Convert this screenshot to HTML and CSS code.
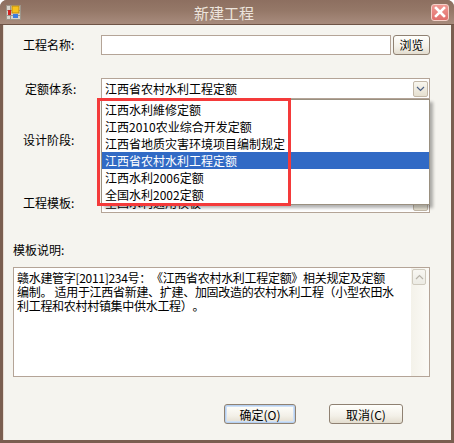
FILE: index.html
```html
<!DOCTYPE html>
<html lang="zh-CN">
<head>
    <meta charset="UTF-8">
    <meta name="viewport" content="width=device-width, initial-scale=1.0">
    <title>新建工程</title>
    <link rel="stylesheet" href="styles.css">
</head>
<body>
    <div class="window">
        <div class="titlebar">
            <svg class="app-icon" width="15" height="15" viewBox="0 0 15 15">
                <rect x="0.5" y="0.5" width="14" height="14" fill="#d8d4cc" stroke="#9c958a"/>
                <line x1="0.5" y1="5.5" x2="14.5" y2="5.5" stroke="#9c958a"/>
                <line x1="0.5" y1="10.5" x2="14.5" y2="10.5" stroke="#9c958a"/>
                <line x1="4.5" y1="0.5" x2="4.5" y2="14.5" stroke="#9c958a"/>
                <rect x="6" y="1" width="7" height="7" fill="#f7c21c" stroke="#c08a10"/>
                <rect x="2" y="5" width="3" height="5" fill="#d42020"/>
                <rect x="7" y="9" width="5" height="4" fill="#3c7ce0"/>
            </svg>
            <div class="title">新建工程</div>
            <div class="close-btn">
                <svg width="12" height="12" viewBox="0 0 12 12">
                    <path d="M2 2 L10 10 M10 2 L2 10" stroke="#fff" stroke-width="2.6" stroke-linecap="square"/>
                </svg>
            </div>
        </div>

        <div class="client">
            <div class="row row-name">
                <div class="label">工程名称:</div>
                <div class="textbox"></div>
                <div class="btn btn-browse">浏览</div>
            </div>

            <div class="row row-quota">
                <div class="label label-quota">定额体系:</div>
                <div class="combo">
                    <span class="combo-text">江西省农村水利工程定额</span>
                    <span class="drop-btn"><svg width="9" height="6" viewBox="0 0 9 6"><path d="M1 1 L4.5 4.5 L8 1" fill="none" stroke="#4d6185" stroke-width="1.2"/></svg></span>
                </div>
            </div>

            <div class="row row-stage">
                <div class="label">设计阶段:</div>
                <div class="combo">
                    <span class="combo-text"></span>
                    <span class="drop-btn"></span>
                </div>
            </div>

            <div class="row row-template">
                <div class="label">工程模板:</div>
                <div class="combo">
                    <span class="combo-text">全国水利通用模板</span>
                    <span class="drop-btn"></span>
                </div>
            </div>

            <div class="caption">模板说明:</div>

            <div class="memo">
                <div class="memo-text">
                    <div>赣水建管字[2011]234号：《江西省农村水利工程定额》相关规定及定额</div>
                    <div>编制。 适用于江西省新建、扩建、加固改造的农村水利工程（小型农田水</div>
                    <div>利工程和农村村镇集中供水工程）。</div>
                </div>
                <div class="scrollbar">
                    <div class="scroll-up"><svg width="9" height="6" viewBox="0 0 9 6"><path d="M1 5 L4.5 1.5 L8 5" fill="none" stroke="#b8b4aa" stroke-width="1.2"/></svg></div>
                </div>
            </div>

            <div class="buttons">
                <div class="btn btn-ok">确定(O)</div>
                <div class="btn btn-cancel">取消(C)</div>
            </div>

            <!-- 展开的下拉列表 -->
            <ul class="droplist">
                <li>江西水利維修定额</li>
                <li>江西2010农业综合开发定额</li>
                <li>江西省地质灾害环境项目编制规定</li>
                <li class="selected">江西省农村水利工程定额</li>
                <li>江西水利2006定额</li>
                <li>全国水利2002定额</li>
            </ul>
            <div class="mark"></div>
        </div>
    </div>
</body>
</html>
```

FILE: styles.css
```css
body {
    margin: 0;
    width: 454px;
    height: 443px;
    overflow: hidden;
    background: #ffffff;
    font-family: "Noto Sans CJK SC", "Liberation Sans", sans-serif;
    font-size: 12px;
    color: #000;
}
.window {
    width: 454px;
    height: 443px;
    box-sizing: border-box;
    display: flex;
    flex-direction: column;
    background: #7a5e50;
    border-radius: 7px 7px 0 0;
    overflow: hidden;
}
.titlebar {
    height: 25px;
    flex: none;
    display: flex;
    align-items: center;
    position: relative;
    background: linear-gradient(#8d6f60 0%, #957868 45%, #a88c7d 100%);
    border-bottom: 1px solid #6f5446;
    box-sizing: border-box;
}
.app-icon {
    margin-left: 6px;
}
.title {
    flex: 1;
    text-align: center;
    color: #ece4dc;
    font-size: 15px;
    margin-right: 4px;
}
.close-btn {
    width: 18px;
    height: 17px;
    margin-right: 5px;
    box-sizing: border-box;
    border: 1px solid #f4d0c8;
    border-radius: 3px;
    background: linear-gradient(#f09a94, #e06e6a);
    display: flex;
    align-items: center;
    justify-content: center;
}
.client {
    flex: 1;
    position: relative;
    margin: 0 3px 3px 3px;
    background: #f5f4ef;
    border-left: 1px solid #e8dcd2;
    padding-left: 9px;
    padding-top: 9px;
    display: flex;
    flex-direction: column;
}
.row {
    display: flex;
    align-items: center;
    height: 21px;
}
.row-quota { margin-top: 23px; }
.row-stage { margin-top: 30px; }
.row-template { margin-top: 42px; }
.label {
    width: 88px;
    padding-left: 10px;
    box-sizing: border-box;
}
.label-quota {
    padding-left: 12px;
}
.textbox {
    width: 290px;
    height: 20px;
    box-sizing: border-box;
    border: 1px solid #b4a497;
    background: #fff;
}
.btn {
    box-sizing: border-box;
    height: 20px;
    border: 1px solid #8f8172;
    border-radius: 3px;
    background: linear-gradient(#fffffc 0%, #f3f0e8 60%, #e3ddcf 100%);
    display: flex;
    align-items: center;
    justify-content: center;
}
.btn-browse {
    width: 37px;
    margin-left: 2px;
}
.combo {
    width: 329px;
    height: 21px;
    box-sizing: border-box;
    border: 1px solid #b4a497;
    background: #fff;
    display: flex;
    align-items: center;
    justify-content: space-between;
    padding-left: 3px;
    padding-right: 1px;
}
.drop-btn {
    width: 15px;
    height: 16px;
    box-sizing: border-box;
    border: 1px solid #c3b8a8;
    border-radius: 2px;
    background: linear-gradient(#f8f6ef, #e6e0d0);
    display: flex;
    align-items: center;
    justify-content: center;
}
.caption {
    margin-top: 30px;
    height: 14px;
    line-height: 14px;
}
.memo {
    margin-top: 10px;
    width: 417px;
    height: 110px;
    box-sizing: border-box;
    border: 1px solid #b4a497;
    background: #fff;
    display: flex;
    justify-content: space-between;
}
.memo-text {
    padding: 3px 0 0 3px;
    line-height: 14px;
    white-space: nowrap;
    text-spacing-trim: space-all;
    letter-spacing: -0.3px;
}
.scrollbar {
    width: 18px;
    background: linear-gradient(90deg, #f4f2ea, #fbfaf6);
    padding: 1px 3px 0 1px;
    box-sizing: border-box;
}
.scroll-up {
    height: 16px;
    box-sizing: border-box;
    border: 1px solid #cfcabe;
    border-radius: 2px;
    background: linear-gradient(#f8f7f2, #ecebe4);
    display: flex;
    align-items: center;
    justify-content: center;
}
.buttons {
    margin-top: 27px;
    display: flex;
    gap: 33px;
    padding-left: 211px;
}
.btn-ok {
    width: 72px;
    box-shadow: inset 0 0 0 1px #b6d0f0, inset 0 0 0 2px #cfe0f6;
}
.btn-cancel {
    width: 74px;
}
.droplist {
    position: absolute;
    left: 97px;
    top: 74px;
    width: 329px;
    height: 106px;
    margin: 0;
    padding: 1px 0 0 0;
    box-sizing: border-box;
    list-style: none;
    background: #fff;
    border: 1px solid #9a9080;
    box-shadow: 3px 3px 3px rgba(0, 0, 0, 0.3);
}
.droplist li {
    height: 17px;
    line-height: 17px;
    padding-left: 3px;
    white-space: nowrap;
}
.droplist li.selected {
    background: #316ac5;
    color: #fff;
}
.mark {
    position: absolute;
    left: 93px;
    top: 73px;
    width: 194px;
    height: 108px;
    box-sizing: border-box;
    border: 3px solid #f43a3a;
}
```
